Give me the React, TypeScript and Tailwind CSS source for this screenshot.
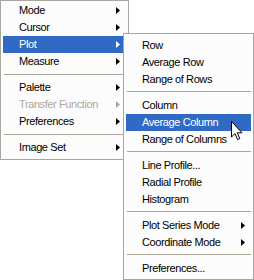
import React from "react"

type Item =
  | { kind: "item"; label: string; sub?: boolean; disabled?: boolean; active?: boolean }
  | { kind: "sep" }

const mainItems: Item[] = [
  { kind: "item", label: "Mode", sub: true },
  { kind: "item", label: "Cursor", sub: true },
  { kind: "item", label: "Plot", sub: true, active: true },
  { kind: "item", label: "Measure", sub: true },
  { kind: "sep" },
  { kind: "item", label: "Palette", sub: true },
  { kind: "item", label: "Transfer Function", sub: true, disabled: true },
  { kind: "item", label: "Preferences", sub: true },
  { kind: "sep" },
  { kind: "item", label: "Image Set", sub: true },
]

const plotItems: Item[] = [
  { kind: "item", label: "Row" },
  { kind: "item", label: "Average Row" },
  { kind: "item", label: "Range of Rows" },
  { kind: "sep" },
  { kind: "item", label: "Column" },
  { kind: "item", label: "Average Column", active: true },
  { kind: "item", label: "Range of Columns" },
  { kind: "sep" },
  { kind: "item", label: "Line Profile..." },
  { kind: "item", label: "Radial Profile" },
  { kind: "item", label: "Histogram" },
  { kind: "sep" },
  { kind: "item", label: "Plot Series Mode", sub: true },
  { kind: "item", label: "Coordinate Mode", sub: true },
  { kind: "sep" },
  { kind: "item", label: "Preferences..." },
]

function Arrow({ color }: { color: string }) {
  return (
    <svg width="4" height="7" viewBox="0 0 4 7" className="shrink-0">
      <path d="M0 0 L4 3.5 L0 7 Z" fill={color} />
    </svg>
  )
}

function MenuList({ items, sepTop }: { items: Item[]; sepTop: string }) {
  return (
    <>
      {items.map((item, i) =>
        item.kind === "sep" ? (
          <div key={i} className={`h-[9px] ${sepTop}`}>
            <div className="ml-[1px] h-px bg-[#aca899]" />
          </div>
        ) : (
          <div
            key={i}
            className={`flex h-[17px] items-center justify-between pl-[16px] pr-[6px] ${
              item.active ? "bg-[#316ac5] text-white" : item.disabled ? "text-[#aca899]" : "text-black"
            }`}
          >
            <span className="whitespace-nowrap leading-none tracking-[-0.4px]">{item.label}</span>
            {item.sub && <Arrow color={item.active ? "#ffffff" : item.disabled ? "#aca899" : "#000000"} />}
          </div>
        )
      )}
    </>
  )
}

export default function App() {
  return (
    <div className="relative h-[280px] w-[254px] bg-white font-['Liberation_Sans',Arial,sans-serif] text-[11px]">
      <div className="w-[129px] border border-[#a7a6a0] bg-[#fcfcfc] px-[2px] pb-[3px] pt-[1px]">
        <MenuList items={mainItems} sepTop="pt-[4px]" />
      </div>

      <div className="absolute left-[123px] top-[33px] w-[131px] border border-[#a7a6a0] bg-[#fcfcfc] px-[2px] pb-[2px] pt-[3px]">
        <MenuList items={plotItems} sepTop="pt-[3px]" />
      </div>

      {/* mouse pointer */}
      <svg width="13" height="20" viewBox="0 0 13 20" className="absolute left-[231px] top-[121px]">
        <path
          d="M0.5 0.5 L0.5 16 L4 12.6 L6.6 18.6 L8.8 17.6 L6.3 11.8 L11 11.8 Z"
          fill="#ffffff"
          stroke="#000000"
          strokeWidth="1"
          strokeLinejoin="miter"
        />
      </svg>
    </div>
  )
}
